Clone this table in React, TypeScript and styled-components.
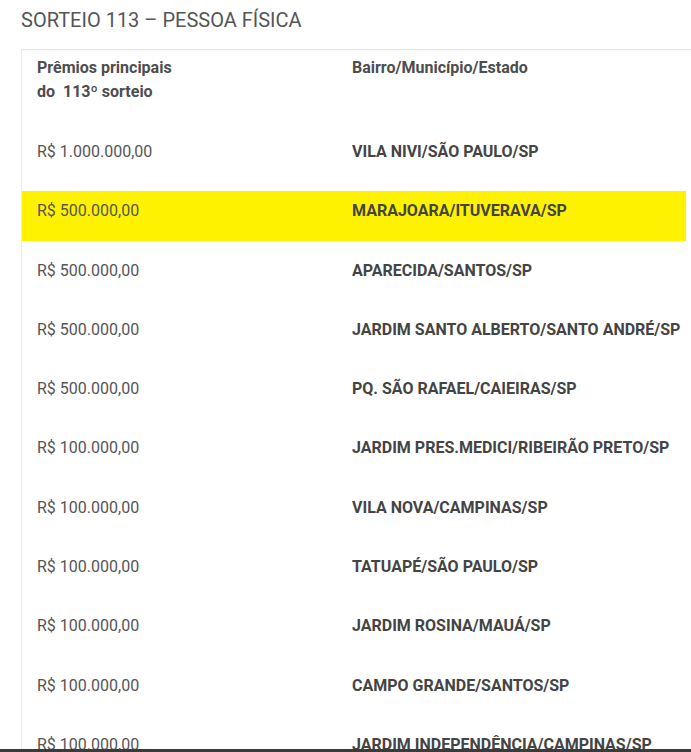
import { FC } from 'react';
import styled, { createGlobalStyle } from 'styled-components';

interface Prize {
  value: string;
  place: string;
  highlight?: boolean;
}

const prizes: Prize[] = [
  { value: 'R$ 1.000.000,00', place: 'VILA NIVI/SÃO PAULO/SP' },
  { value: 'R$ 500.000,00', place: 'MARAJOARA/ITUVERAVA/SP', highlight: true },
  { value: 'R$ 500.000,00', place: 'APARECIDA/SANTOS/SP' },
  { value: 'R$ 500.000,00', place: 'JARDIM SANTO ALBERTO/SANTO ANDRÉ/SP' },
  { value: 'R$ 500.000,00', place: 'PQ. SÃO RAFAEL/CAIEIRAS/SP' },
  { value: 'R$ 100.000,00', place: 'JARDIM PRES.MEDICI/RIBEIRÃO PRETO/SP' },
  { value: 'R$ 100.000,00', place: 'VILA NOVA/CAMPINAS/SP' },
  { value: 'R$ 100.000,00', place: 'TATUAPÉ/SÃO PAULO/SP' },
  { value: 'R$ 100.000,00', place: 'JARDIM ROSINA/MAUÁ/SP' },
  { value: 'R$ 100.000,00', place: 'CAMPO GRANDE/SANTOS/SP' },
  { value: 'R$ 100.000,00', place: 'JARDIM INDEPENDÊNCIA/CAMPINAS/SP' },
];

const App: FC = () => {
  return (
    <>
      <GlobalStyle />
      <Page>
        <Title>SORTEIO 113 – PESSOA FÍSICA</Title>
        <TableWrapper>
          <Table>
            <HeadRow>
              <HeadCell>
                Prêmios principais
                <br />
                do&nbsp; 113º sorteio
              </HeadCell>
              <HeadCell>Bairro/Município/Estado</HeadCell>
            </HeadRow>
            {prizes.map((p, i) => (
              <Row key={i} $highlight={p.highlight}>
                <Value>{p.value}</Value>
                <Place>{p.place}</Place>
              </Row>
            ))}
          </Table>
        </TableWrapper>
      </Page>
      <BottomBar />
    </>
  );
};

const GlobalStyle = createGlobalStyle`
  body {
    margin: 0;
    background: #fff;
    font-family: Roboto, 'Liberation Sans', sans-serif;
    overflow: hidden;
  }
`;

const Page = styled.div`
  padding-left: 21px;
`;

const Title = styled.h2`
  margin: 0;
  height: 49px;
  padding-top: 8px;
  box-sizing: border-box;
  font-size: 20px;
  line-height: 24px;
  font-weight: 400;
  color: #555;
`;

const TableWrapper = styled.div`
  border-top: 1px solid #e4e4e4;
  border-left: 1px solid #ececec;
  box-shadow: inset 0 2px 3px -2px rgba(0, 0, 0, 0.06);
`;

const Table = styled.div`
  width: 664px;
  display: flex;
  flex-direction: column;
  gap: 10px;
`;

const HeadRow = styled.div`
  display: grid;
  grid-template-columns: 315px 1fr;
  height: 72px;
  padding-top: 6px;
  box-sizing: border-box;
`;

const HeadCell = styled.div`
  padding-left: 15px;
  font-size: 16px;
  line-height: 24px;
  font-weight: 700;
  color: #4d4d4d;
`;

const Row = styled.div<{ $highlight?: boolean }>`
  display: grid;
  grid-template-columns: 315px 1fr;
  height: 49.3px;
  padding-top: 8px;
  box-sizing: border-box;
  background: ${({ $highlight }) => ($highlight ? '#fff200' : 'transparent')};
`;

const Value = styled.div`
  padding-left: 15px;
  font-size: 16px;
  line-height: 24px;
  color: #555;
  white-space: nowrap;
`;

const Place = styled.div`
  padding-left: 15px;
  font-size: 16px;
  line-height: 24px;
  font-weight: 700;
  color: #444;
  white-space: nowrap;
`;

const BottomBar = styled.div`
  position: fixed;
  left: 0;
  right: 0;
  bottom: 0;
  height: 3px;
  background: #3b3b3b;
`;

export default App;
